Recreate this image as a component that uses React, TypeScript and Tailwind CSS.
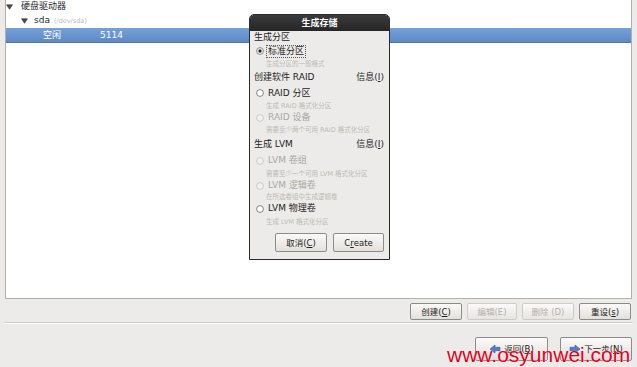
import React from "react";

const FONT = { fontFamily: '"DejaVu Sans", "Noto Sans CJK SC", sans-serif' };

function Tri({ color = "#4a4a4a" }: { color?: string }) {
  return (
    <svg width="7" height="6" viewBox="0 0 7 6" className="shrink-0">
      <path d="M0.5 0.8 L6.5 0.8 L3.5 5.3 Z" fill={color} stroke="#333" strokeWidth="0.6" />
    </svg>
  );
}

function Radio({ checked, disabled }: { checked?: boolean; disabled?: boolean }) {
  return (
    <svg width="8" height="8" viewBox="0 0 8 8" className="shrink-0">
      <circle cx="4" cy="4" r="3.4" fill={disabled ? "#f3f1ef" : "#ffffff"} stroke={disabled ? "#c4c1bd" : "#6b6a68"} strokeWidth="0.8" />
      {checked && <circle cx="4" cy="4" r="1.7" fill="#222" />}
    </svg>
  );
}

function RadioRow({ label, checked, disabled, h, focus }: { label: string; checked?: boolean; disabled?: boolean; h: string; focus?: boolean }) {
  return (
    <div className={`flex items-center pl-[6px] ${h}`}>
      <Radio checked={checked} disabled={disabled} />
      <span
        className={`ml-[2px] px-[1px] text-[9px] leading-[11px] ${disabled ? "text-[#aaa7a3]" : "text-[#1e1e1e]"} ${focus ? "border border-dotted border-[#555]" : "border border-transparent"}`}
      >
        {label}
      </span>
    </div>
  );
}

function Hint({ text, h }: { text: string; h: string }) {
  return (
    <div className={`flex items-center pl-[16px] ${h}`}>
      <span className="text-[6.5px] leading-[8px] text-[#bdbab6]">{text}</span>
    </div>
  );
}

function Header({ text, info, h }: { text: string; info?: boolean; h: string }) {
  return (
    <div className={`flex items-center justify-between pl-[4px] pr-[5px] ${h}`}>
      <span className="text-[9px] leading-[11px] text-[#1e1e1e]">{text}</span>
      {info && (
        <span className="text-[9px] leading-[11px] text-[#1e1e1e]">
          信息(<span className="underline">I</span>)
        </span>
      )}
    </div>
  );
}

function Btn({ children, w, h, disabled }: { children: React.ReactNode; w: string; h: string; disabled?: boolean }) {
  return (
    <div
      className={`${w} ${h} flex items-center justify-center rounded-[2px] border text-[8.5px] leading-[10px] bg-gradient-to-b from-[#fbfaf9] to-[#e3e0dc] ${disabled ? "border-[#cfccc8] text-[#b3b0ac] from-[#f1efed] to-[#e7e4e1]" : "border-[#8e8c89] text-[#222]"}`}
    >
      {children}
    </div>
  );
}

export default function App() {
  return (
    <div className="relative w-[637px] h-[367px] overflow-hidden bg-[#edebe9] flex flex-col" style={FONT}>
      {/* main tree panel */}
      <div className="mx-[5px] h-[299px] bg-white border-x border-b border-[#b2b0ad] flex flex-col">
        <div className="h-[13px] flex items-center pl-[0px] gap-[8px]">
          <Tri />
          <span className="text-[9px] leading-[11px] text-[#2a2a2a]">硬盘驱动器</span>
        </div>
        <div className="h-[15px] flex items-center pl-[15px] gap-[6px]">
          <Tri />
          <span className="text-[9px] leading-[11px] text-[#2a2a2a]">sda</span>
          <span className="text-[6.5px] leading-[8px] text-[#c0bdb9] -ml-[2px]">(/dev/sda)</span>
        </div>
        <div className="h-[15px] flex items-center bg-gradient-to-b from-[#76a0d8] to-[#5e89c4] border-b border-[#5078b0]">
          <span className="ml-[37px] w-[57px] text-[9px] leading-[11px] text-white">空闲</span>
          <span className="text-[9px] leading-[11px] text-white">5114</span>
        </div>
      </div>

      {/* action buttons */}
      <div className="mt-[4px] flex justify-end gap-[5px] pr-[6px]">
        <Btn w="w-[52px]" h="h-[17px]">
          创建(<span className="underline">C</span>)
        </Btn>
        <Btn w="w-[50px]" h="h-[17px]" disabled>
          编辑(E)
        </Btn>
        <Btn w="w-[52px]" h="h-[17px]" disabled>
          删除 (D)
        </Btn>
        <Btn w="w-[52px]" h="h-[17px]">
          重设(<span className="underline">s</span>)
        </Btn>
      </div>

      {/* separator */}
      <div className="mt-[2px] mx-[4px] h-[1px] bg-[#cfccc8]" />
      <div className="mx-[4px] h-[1px] bg-white" />

      {/* nav buttons */}
      <div className="mt-[13px] flex justify-end gap-[12px] pr-[5px]">
        <Btn w="w-[73px]" h="h-[24px]">
          <svg width="12" height="10" viewBox="0 0 12 10" className="mr-[3px]">
            <path d="M1 5 L6 1 L6 3.3 L11 3.3 L11 6.7 L6 6.7 L6 9 Z" fill="#4f7fc4" stroke="#2d5a9a" strokeWidth="0.6" />
          </svg>
          返回(<span className="underline">B</span>)
        </Btn>
        <Btn w="w-[72px]" h="h-[24px]">
          <svg width="12" height="10" viewBox="0 0 12 10" className="mr-[3px]">
            <path d="M11 5 L6 1 L6 3.3 L1 3.3 L1 6.7 L6 6.7 L6 9 Z" fill="#4f7fc4" stroke="#2d5a9a" strokeWidth="0.6" />
          </svg>
          下一步(<span className="underline">N</span>)
        </Btn>
      </div>

      {/* watermark */}
      <div
        className="absolute left-[447px] top-[344px] text-[21px] leading-[21px] text-[#e1001c] whitespace-nowrap"
        style={{ fontFamily: '"Liberation Sans", Arial, sans-serif', textShadow: "0 0 1px #fff" }}
      >
        www.osyunwei.com
      </div>

      {/* dialog */}
      <div className="absolute left-[249px] top-[14px] w-[141px] h-[246px] flex flex-col rounded-t-[5px] border border-[#2b2b2b] bg-[#edebe9] overflow-hidden">
        <div className="h-[16px] shrink-0 flex items-center justify-center bg-gradient-to-b from-[#3a3a3a] to-[#262626]">
          <span className="text-[9px] leading-[11px] font-bold text-white">生成存储</span>
        </div>
        <Header text="生成分区" h="h-[13px]" />
        <RadioRow label="标准分区" checked h="h-[14px]" focus />
        <Hint text="生成分区的一般格式" h="h-[11px]" />
        <Header text="创建软件 RAID" info h="h-[17px]" />
        <RadioRow label="RAID 分区" h="h-[14px]" />
        <Hint text="生成 RAID 格式化分区" h="h-[11px]" />
        <RadioRow label="RAID 设备" disabled h="h-[13px]" />
        <Hint text="需要至少两个可用 RAID 格式化分区" h="h-[11px]" />
        <Header text="生成 LVM" info h="h-[18px]" />
        <RadioRow label="LVM 卷组" disabled h="h-[15px]" />
        <Hint text="需要至少一个可用 LVM 格式化分区" h="h-[11px]" />
        <RadioRow label="LVM 逻辑卷" disabled h="h-[13px]" />
        <Hint text="在所选卷组中生成逻辑卷" h="h-[10px]" />
        <RadioRow label="LVM 物理卷" h="h-[13px]" />
        <Hint text="生成 LVM 格式化分区" h="h-[13px]" />
        <div className="mt-[5px] flex justify-end gap-[6px] pr-[5px]">
          <Btn w="w-[52px]" h="h-[19px]">
            取消(<span className="underline">C</span>)
          </Btn>
          <Btn w="w-[51px]" h="h-[19px]">
            C<span className="underline">r</span>eate
          </Btn>
        </div>
      </div>
    </div>
  );
}
